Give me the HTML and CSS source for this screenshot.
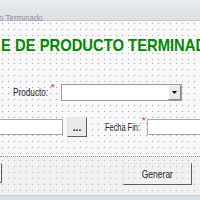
FILE: index.html
```html
<!DOCTYPE html>
<html lang="es">
<head>
<meta charset="utf-8">
<title>Producto Terminado</title>
<link rel="stylesheet" href="styles.css">
</head>
<body>
<div class="window">
  <div class="titlebar"><span class="title">o Terminado</span></div>
  <div class="form">
    <div class="head-area"><h1 class="heading">E DE PRODUCTO TERMINAD</h1></div>
    <div class="fields">
      <div class="row row-product">
        <span class="label label-product">Producto:</span>
        <span class="req req-product">*</span>
        <div class="combo">
          <span class="combo-btn">
            <svg class="arrow" width="5" height="3" viewBox="0 0 5 3"><path d="M0 0H5L2.5 3Z" fill="#000"/></svg>
          </span>
        </div>
      </div>
      <div class="row row-dates">
        <div class="textbox tb-start"></div>
        <div class="btn btn-dots">...</div>
        <span class="label label-fin">Fecha Fin:</span>
        <span class="req req-fin">*</span>
        <div class="textbox tb-end"></div>
      </div>
    </div>
    <div class="footer">
      <div class="btn btn-left"></div>
      <div class="btn btn-generar"><span class="btn-text">Generar</span></div>
    </div>
  </div>
  <div class="bottom-edge"></div>
</div>
</body>
</html>
```
FILE: styles.css
```css
html, body {
  margin: 0;
  padding: 0;
  width: 200px;
  height: 200px;
  overflow: hidden;
  background: #f4f4f4;
}
.window {
  width: 200px;
  height: 200px;
  display: flex;
  flex-direction: column;
  font-family: "Liberation Sans", Arial, sans-serif;
  overflow: hidden;
}
.titlebar {
  box-sizing: border-box;
  height: 21px;
  padding-top: 7px;
  background: linear-gradient(#e8ebef, #dcdfe4);
  border-bottom: 1px solid #c3c8ce;
  white-space: nowrap;
}
.title {
  display: inline-block;
  font-size: 9.5px;
  line-height: 9px;
  color: #8f959c;
  margin-left: -1px;
  transform: scaleX(0.84);
  transform-origin: left center;
}
.form {
  display: flex;
  flex-direction: column;
}
.head-area {
  height: 39px;
  box-sizing: border-box;
  padding-top: 16px;
  background-color: #f8f8f8;
  background-image:
    linear-gradient(90deg, transparent 1px, #f8f8f8 1px),
    linear-gradient(#a4a4a4 1px, transparent 1px);
  background-size: 6px 6px;
  background-position: 2px 2px;
  overflow: hidden;
  white-space: nowrap;
}
.heading {
  display: inline-block;
  margin: 0 0 0 1px;
  font-size: 17px;
  line-height: 17px;
  font-weight: bold;
  color: #008a00;
  transform: scaleX(0.87);
  transform-origin: left center;
}
.fields {
  height: 96px;
  box-sizing: border-box;
  padding-top: 24px;
  display: flex;
  flex-direction: column;
  gap: 16px;
  background-color: #f8f8f8;
  background-image:
    linear-gradient(90deg, transparent 1px, #f8f8f8 1px),
    linear-gradient(#9c9cdc 1px, transparent 1px);
  background-size: 6px 6px;
  background-position: 2px 3px;
}
.row {
  display: flex;
  align-items: center;
  white-space: nowrap;
}
.label {
  display: inline-block;
  font-size: 10px;
  color: #1e1e28;
  transform: scaleX(0.82);
  transform-origin: left center;
  flex: none;
}
.req {
  align-self: flex-start;
  font-size: 9px;
  line-height: 6px;
  height: 5px;
  color: #ff4a4a;
  font-weight: bold;
  flex: none;
}
.label-product {
  margin-left: 13px;
  width: 38px;
}
.req-product {
  width: 10px;
}
.combo {
  width: 121px;
  height: 17px;
  box-sizing: border-box;
  border: 1px solid #9a9a9a;
  background: #fff;
  display: flex;
  justify-content: flex-end;
  flex: none;
}
.combo-btn {
  width: 13px;
  height: 15px;
  box-sizing: border-box;
  background: #e9e9e9;
  border-top: 1px solid #fafafa;
  border-left: 1px solid #fafafa;
  border-right: 1px solid #8a8a8a;
  border-bottom: 1px solid #8a8a8a;
  display: flex;
  align-items: center;
  justify-content: center;
}
.arrow {
  display: block;
}
.row-dates {
  height: 20px;
}
.textbox {
  height: 16px;
  box-sizing: border-box;
  border: 1px solid #a9a9a9;
  background: #fff;
  flex: none;
}
.tb-start {
  width: 83px;
  margin-left: -20px;
}
.btn {
  box-sizing: border-box;
  border-top: 1px solid #e4e4e4;
  border-left: 1px solid #e4e4e4;
  border-right: 1px solid #5c5c5c;
  border-bottom: 1px solid #5c5c5c;
  background: #eaeaea;
  font-size: 10px;
  color: #20202c;
  display: flex;
  align-items: center;
  justify-content: center;
  flex: none;
}
.btn-dots {
  width: 20px;
  height: 20px;
  margin-left: 4px;
  font-weight: bold;
  line-height: 10px;
  padding-top: 2px;
}
.label-fin {
  margin-left: 18px;
  width: 37px;
  transform: scaleX(0.74);
}
.req-fin {
  width: 5px;
}
.tb-end {
  width: 63px;
}
.footer {
  height: 39px;
  box-sizing: border-box;
  padding: 6px 8px 0 0;
  border-top: 1px dotted #8c8c8c;
  display: flex;
  justify-content: space-between;
  align-items: flex-start;
  background-color: #f1f1f1;
  background-image:
    linear-gradient(90deg, transparent 1px, #f1f1f1 1px),
    linear-gradient(#b4b4b4 1px, transparent 1px);
  background-size: 6px 6px;
  background-position: 2px 3px;
}
.btn-left {
  width: 40px;
  height: 20px;
  margin-left: -38px;
  background: transparent;
}
.btn-generar {
  width: 69px;
  height: 22px;
  background: transparent;
}
.btn-text {
  display: inline-block;
  transform: scaleX(0.85);
}
.bottom-edge {
  height: 5px;
  box-sizing: border-box;
  border-top: 1px solid #c6ced8;
  background: #d7e2ee;
}
```
